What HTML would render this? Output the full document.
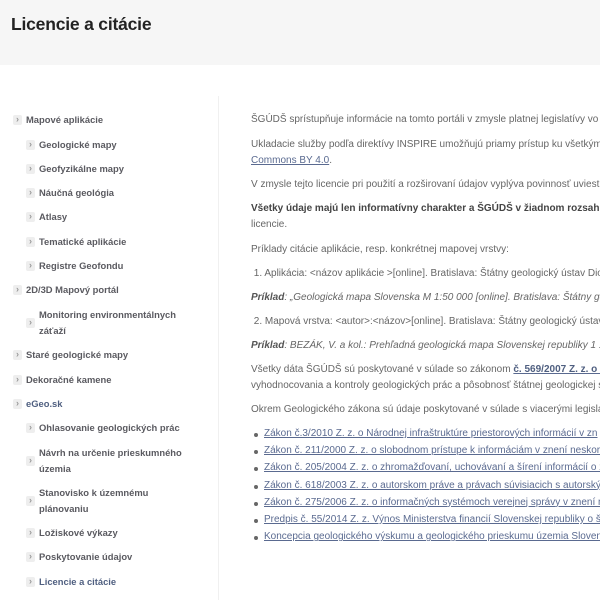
<!DOCTYPE html>
<html><head><meta charset="utf-8"><style>
*{margin:0;padding:0;box-sizing:border-box}
body{width:600px;height:600px;overflow:hidden;background:#fff;font-family:"Liberation Sans",sans-serif;position:relative}
.hdr{position:absolute;left:0;top:0;width:600px;height:65px;background:#f6f6f6}
.hdr h1{position:absolute;left:11px;top:14px;font-size:17.5px;font-weight:bold;color:#222;letter-spacing:-0.2px}
.vline{position:absolute;left:218px;top:96px;width:1px;height:504px;background:#f0f0f0}
.nav{position:absolute;left:0;top:2px}
.nav div{position:absolute;font-size:9.4px;font-weight:bold;color:#5a5a60;line-height:16px;white-space:nowrap}
.nav div:before{content:"›";position:absolute;left:-13px;top:50%;margin-top:-5px;width:9px;height:10px;background:#eee;border-radius:2px;color:#999;font-size:9px;line-height:9px;text-align:center}
.wrap{position:absolute;left:251px;top:2px;width:349px;height:598px;overflow:hidden}
.c{position:absolute;left:0;font-size:10px;color:#666;white-space:nowrap;line-height:16px}
.c a{color:#5a6a90;text-decoration:underline}
.c b{color:#444}
.c i b{color:#555}
ul.c{list-style:none}
ul.c li{position:relative;padding-left:13px;height:17.2px}
ul.c li:before{content:"";position:absolute;left:3px;top:7px;width:4px;height:4px;border-radius:50%;background:#666}
</style></head><body>
<div class="hdr"><h1>Licencie a citácie</h1></div>
<div class="vline"></div>
<div class="nav">
<div style="left:26px;top:110px">Mapové aplikácie</div>
<div style="left:39px;top:135px">Geologické mapy</div>
<div style="left:39px;top:159px">Geofyzikálne mapy</div>
<div style="left:39px;top:183px">Náučná geológia</div>
<div style="left:39px;top:207px">Atlasy</div>
<div style="left:39px;top:232px">Tematické aplikácie</div>
<div style="left:39px;top:256px">Registre Geofondu</div>
<div style="left:26px;top:280px">2D/3D Mapový portál</div>
<div style="left:39px;top:305px">Monitoring environmentálnych<br>záťaží</div>
<div style="left:26px;top:345px">Staré geologické mapy</div>
<div style="left:26px;top:370px">Dekoračné kamene</div>
<div style="left:26px;top:394px;color:#4f5f80">eGeo.sk</div>
<div style="left:39px;top:418px">Ohlasovanie geologických prác</div>
<div style="left:39px;top:443px">Návrh na určenie prieskumného<br>územia</div>
<div style="left:39px;top:483px">Stanovisko k územnému<br>plánovaniu</div>
<div style="left:39px;top:523px">Ložiskové výkazy</div>
<div style="left:39px;top:547px">Poskytovanie údajov</div>
<div style="left:39px;top:572px;color:#4f5f80">Licencie a citácie</div>
</div>
<div class="wrap">
<div class="c" style="top:110px">ŠGÚDŠ sprístupňuje informácie na tomto portáli v zmysle platnej legislatívy vo</div>
<div class="c" style="top:135px">Ukladacie služby podľa direktívy INSPIRE umožňujú priamy prístup ku všetkým<br><a>Commons BY 4.0</a>.</div>
<div class="c" style="top:175px">V zmysle tejto licencie pri použití a rozširovaní údajov vyplýva povinnosť uviest</div>
<div class="c" style="top:199px"><b>Všetky údaje majú len informatívny charakter a ŠGÚDŠ v žiadnom rozsah</b><br>licencie.</div>
<div class="c" style="top:240px">Príklady citácie aplikácie, resp. konkrétnej mapovej vrstvy:</div>
<div class="c" style="top:264px">&nbsp;1. Aplikácia: &lt;názov aplikácie &gt;[online]. Bratislava: Štátny geologický ústav Dio</div>
<div class="c" style="top:288px"><i><b>Príklad</b>: „Geologická mapa Slovenska M 1:50 000 [online]. Bratislava: Štátny geolog</i></div>
<div class="c" style="top:312px">&nbsp;2. Mapová vrstva: &lt;autor&gt;:&lt;názov&gt;[online]. Bratislava: Štátny geologický ústav</div>
<div class="c" style="top:336px"><i><b>Príklad</b>: BEZÁK, V. a kol.: Prehľadná geologická mapa Slovenskej republiky 1 : 200 0</i></div>
<div class="c" style="top:360px">Všetky dáta ŠGÚDŠ sú poskytované v súlade so zákonom <a><b style="color:#4f5f80">č. 569/2007 Z. z. o ge</b></a><br>vyhodnocovania a kontroly geologických prác a pôsobnosť štátnej geologickej s</div>
<div class="c" style="top:400px">Okrem Geologického zákona sú údaje poskytované v súlade s viacerými legisla</div>
<ul class="c" style="top:424px">
<li><a>Zákon č.3/2010 Z. z. o Národnej infraštruktúre priestorových informácií v zn</a></li>
<li><a>Zákon č. 211/2000 Z. z. o slobodnom prístupe k informáciám v znení neskor</a></li>
<li><a>Zákon č. 205/2004 Z. z. o zhromažďovaní, uchovávaní a šírení informácií o ži</a></li>
<li><a>Zákon č. 618/2003 Z. z. o autorskom práve a právach súvisiacich s autorským</a></li>
<li><a>Zákon č. 275/2006 Z. z. o informačných systémoch verejnej správy v znení n</a></li>
<li><a>Predpis č. 55/2014 Z. z. Výnos Ministerstva financií Slovenskej republiky o št</a></li>
<li><a>Koncepcia geologického výskumu a geologického prieskumu územia Sloven</a></li>
</ul>
</div>
</body></html>
